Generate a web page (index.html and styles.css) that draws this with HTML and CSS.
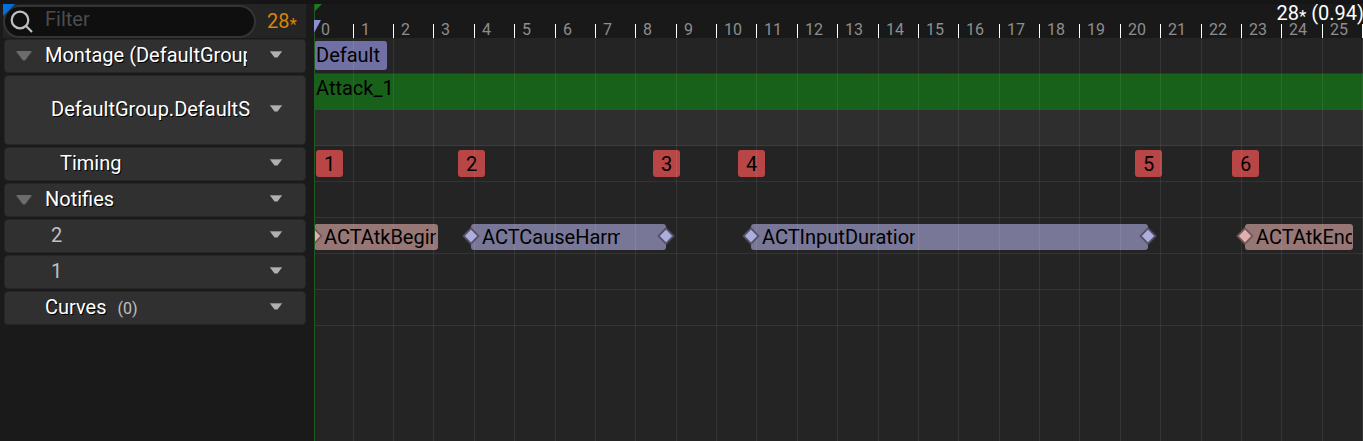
FILE: index.html
```html
<!DOCTYPE html>
<html lang="en">
<head>
<meta charset="utf-8">
<title>Montage timeline</title>
<link rel="stylesheet" href="styles.css">
</head>
<body>
<div class="editor">
  <aside class="outliner">
    <div class="toolbar">
      <div class="search">
        <svg class="search-icon" width="24" height="24" viewBox="0 0 24 24"><circle cx="10" cy="10" r="8.3"/><path d="M15.8 15.8 22 22"/></svg>
        <span>Filter</span>
      </div>
      <span class="frame">28<em>*</em></span>
      <i class="corner"></i>
    </div>
    <div class="row group"><svg class="fold" width="16" height="10"><path d="M0.5 0h15v1L9 9.5H7L.5 1z"/></svg><span class="name">Montage (DefaultGroup)</span><svg class="drop" width="14" height="8"><path d="M1 .5h12L8.5 6.5h-3z"/><path class="edge" d="M1 .5h12"/></svg></div>
    <div class="row tall"><span class="name slot">DefaultGroup.DefaultSlot</span><svg class="drop" width="14" height="8"><path d="M1 .5h12L8.5 6.5h-3z"/><path class="edge" d="M1 .5h12"/></svg></div>
    <div class="row"><span class="name timing">Timing</span><svg class="drop" width="14" height="8"><path d="M1 .5h12L8.5 6.5h-3z"/><path class="edge" d="M1 .5h12"/></svg></div>
    <div class="row group"><svg class="fold" width="16" height="10"><path d="M0.5 0h15v1L9 9.5H7L.5 1z"/></svg><span class="name">Notifies</span><svg class="drop" width="14" height="8"><path d="M1 .5h12L8.5 6.5h-3z"/><path class="edge" d="M1 .5h12"/></svg></div>
    <div class="row"><span class="name dim">2</span><svg class="drop" width="14" height="8"><path d="M1 .5h12L8.5 6.5h-3z"/><path class="edge" d="M1 .5h12"/></svg></div>
    <div class="row"><span class="name dim">1</span><svg class="drop" width="14" height="8"><path d="M1 .5h12L8.5 6.5h-3z"/><path class="edge" d="M1 .5h12"/></svg></div>
    <div class="row"><span class="name curves">Curves <small>(0)</small></span><svg class="drop" width="14" height="8"><path d="M1 .5h12L8.5 6.5h-3z"/><path class="edge" d="M1 .5h12"/></svg></div>
  </aside>
  <main class="timeline">
    <div class="ruler" id="ruler">
      <span class="readout">28<em>*</em> (0.94)</span>
    </div>
    <div class="tracks">
      <div class="track"><span class="section">Default</span></div>
      <div class="track montage"><div class="clip">Attack_1</div></div>
      <div class="track">
        <b class="mark" style="left:2px">1</b><b class="mark" style="left:144px">2</b><b class="mark" style="left:339px">3</b><b class="mark" style="left:424px">4</b><b class="mark" style="left:821px">5</b><b class="mark" style="left:918px">6</b>
      </div>
      <div class="track"></div>
      <div class="track">
        <div class="notify pink first" style="left:0;width:124px"><span style="width:112px">ACTAtkBegin</span></div>
        <div class="notify" style="left:157px;width:195px"><span style="width:138px">ACTCauseHarm</span></div>
        <div class="notify" style="left:437px;width:397px"><span style="width:153px">ACTInputDuration</span></div>
        <div class="notify pink" style="left:931px;width:108px"><span style="width:96px">ACTAtkEnd</span></div>
      </div>
      <div class="track"></div>
      <div class="track"></div>
    </div>
    <svg class="grid" id="grid" width="1049" height="403"></svg>
    <svg class="keys" width="1049" height="30">
      <path class="k pinkkey" d="M0 7.3 7.5 15 0 22.7-7.5 15z"/>
      <path class="k" d="M157 7.3l7.5 7.7-7.5 7.7-7.5-7.7z"/>
      <path class="k" d="M352 7.3l7.5 7.7-7.5 7.7-7.5-7.7z"/>
      <path class="k" d="M437 7.3l7.5 7.7-7.5 7.7-7.5-7.7z"/>
      <path class="k" d="M834 7.3l7.5 7.7-7.5 7.7-7.5-7.7z"/>
      <path class="k pinkkey" d="M931 7.3l7.5 7.7-7.5 7.7-7.5-7.7z"/>
    </svg>
    <svg class="playhead" width="10" height="437"><path fill="#1d7a22" d="M0 0h8L0 8z"/><path fill="#8e8ed0" d="M0 16h7L0 29z"/><path fill="#1f5c20" d="M0 0h1v16H0zM0 29h1v408H0z"/></svg>
  </main>
</div>
<script src="timeline.js"></script>
</body>
</html>
```
FILE: styles.css
```css
* { box-sizing: border-box; }
body { margin: 0; background: #151515; font: 20px/24px Roboto, sans-serif; overflow: hidden; }
em { font-style: normal; font-size: 17px; position: relative; top: 2px; }
.editor { display: flex; height: 441px; padding-top: 4px; background: linear-gradient(#151515 4px, #1a1a1a 4px); padding-left: 3px; }
.outliner { width: 303px; height: 437px; background: #1a1a1a; flex: none; margin-right: 8px; }
.toolbar { position: relative; display: flex; align-items: center; height: 34px; background: #242424; margin-bottom: 1px; }
.search { display: flex; align-items: center; width: 253px; height: 33px; border: 2px solid #343434; border-radius: 17px; background: #0f0f0f; color: #4c4c4c; padding-left: 5px; gap: 11px; }
.search span { margin-top: -5px; }
.search-icon { fill: none; stroke: #c0c0c0; stroke-width: 2.2; position: relative; top: 1px; }
.frame { color: #d98308; margin-left: 11px; }
.corner { position: absolute; left: 0; top: 0; width: 12px; height: 12px; background: #0070e0; clip-path: polygon(0 0, 100% 0, 0 100%); }
.row { display: flex; align-items: center; height: 34px; margin: 0 0 2px 1px; width: 302px; border: 1px solid #262626; border-radius: 4px; background: #303030; position: relative; }
.row.tall { height: 70px; background: #333; }
.name { color: #fff; text-shadow: 1px 1px 0 #000; margin-left: 40px; width: 202px; overflow: hidden; white-space: nowrap; margin-top: -3px; }
.name.slot { margin-left: 46px; width: 199px; }
.name.timing { margin-left: 55px; width: 190px; }
.name.dim { color: #c0c0c0; text-shadow: none; margin-left: 46px; width: 199px; }
.name.curves { height: 24px; }
.fold { margin-left: 11px; fill: #6c6c6c; }
.fold + .name { margin-left: 13px; }
.name small { font-size: 16px; line-height: 1; color: #c0c0c0; text-shadow: none; margin-left: 6px; }
.drop { margin-left: auto; margin-right: 22px; fill: #b0b0b0; position: relative; top: -1px; }
.edge { stroke: #858585; }
.timeline { position: relative; flex: 1; height: 437px; background: #242424; overflow: hidden; }
.ruler { position: relative; display: flex; align-items: flex-end; height: 34px; background: #191919; }
.tick { flex: none; height: 14px; border-left: 1px solid #fff; padding-left: 7px; font-size: 16px; line-height: 12px; color: #8e8e8e; }
.tick:nth-child(2) { border-color: transparent; margin-left: -1px; }
.readout { position: absolute; right: -1px; top: -3px; color: #fff; }
.track { position: relative; height: 36px; border-bottom: 1px solid #333; color: #000; }
.track.montage { height: 72px; background: #2e2e2e; border-bottom-color: #3c3c3c; }
.clip { height: 36px; background: #18611a; padding: 2px; }
.section { display: block; width: 73px; height: 29px; position: relative; top: 3px; border-radius: 3px; background: #7070a4; padding: 2px; }
.mark { position: absolute; top: 4px; width: 27px; height: 27px; line-height: 28px; text-align: center; font-weight: 400; border-radius: 3px; background: #b84646; }
.notify { position: absolute; top: 6px; height: 26px; border-radius: 3px; background: #797798; padding-left: 11px; }
.notify.pink { background: #977776; }
.notify.first { padding-left: 10px; }
.notify span { display: block; overflow: hidden; white-space: nowrap; line-height: 26px; }
.grid { position: absolute; left: 0; top: 34px; stroke: #fff; stroke-opacity: .08; }
.keys { position: absolute; left: 0; top: 217px; }
.k { fill: #adadde; stroke: #555068; stroke-width: 1.8; }
.pinkkey { fill: #e0b0b0; stroke: #745858; }
.playhead { position: absolute; left: 0; top: 0; }
```
FILE: timeline.js
```js
const ticks = [313,353,393,433,474,514,555,595,635,676,716,756,797,837,878,918,958,999,1039,1079,1120,1160,1201,1241,1281,1322,1362];
const ruler = document.getElementById('ruler');
let lines = '';
ticks.forEach((x, i) => {
  const cell = document.createElement('span');
  cell.className = 'tick';
  cell.style.width = ((ticks[i + 1] || x + 40) - x) + 'px';
  cell.textContent = i < 26 ? i : '';
  ruler.append(cell);
  if (i) lines += `M${x - 313.5} 0V403`;
});
document.getElementById('grid').innerHTML = `<path d="${lines}"/>`;
```
